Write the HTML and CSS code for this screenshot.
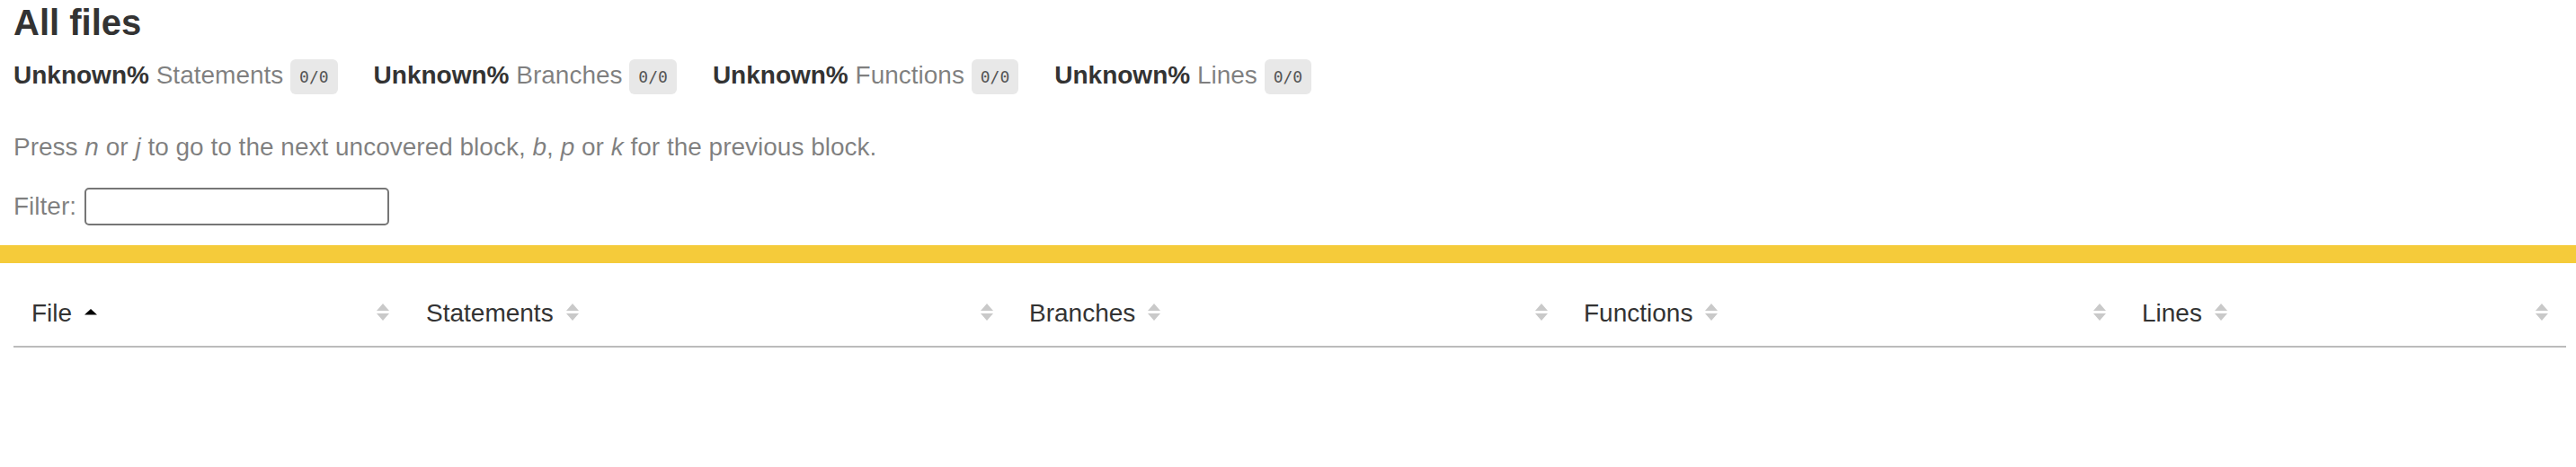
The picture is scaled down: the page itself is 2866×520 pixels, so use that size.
FILE: index.html
```html
<!doctype html>
<html lang="en">
<head>
<meta charset="utf-8">
<title>Code coverage report for All files</title>
<link rel="stylesheet" href="styles.css">
</head>
<body>
<div class="header">
  <h1 class="title">All files</h1>
  <div class="stats">
    <div class="stat"><span class="strong">Unknown% </span><span class="quiet">Statements</span> <span class="fraction">0/0</span></div>
    <div class="stat"><span class="strong">Unknown% </span><span class="quiet">Branches</span> <span class="fraction">0/0</span></div>
    <div class="stat"><span class="strong">Unknown% </span><span class="quiet">Functions</span> <span class="fraction">0/0</span></div>
    <div class="stat"><span class="strong">Unknown% </span><span class="quiet">Lines</span> <span class="fraction">0/0</span></div>
  </div>
  <p class="quiet hint">Press <em>n</em> or <em>j</em> to go to the next uncovered block, <em>b</em>, <em>p</em> or <em>k</em> for the previous block.</p>
  <div class="quiet filter">
    <label for="fileSearch">Filter:</label>
    <input type="search" id="fileSearch" class="search">
  </div>
</div>
<div class="status-line medium"></div>
<div class="table-wrap">
  <table class="coverage-summary">
    <colgroup>
      <col class="c-file"><col class="c-pic"><col class="c-stmt"><col class="c-abs">
      <col class="c-br"><col class="c-abs"><col class="c-fn"><col class="c-abs">
      <col class="c-lines"><col class="c-abs">
    </colgroup>
    <thead>
      <tr>
        <th class="file sorted">File<span class="sorter"><svg viewBox="0 0 14 20" width="14" height="20"><polygon points="7,6 14,12.5 0,12.5" fill="#000"/></svg></span></th>
        <th class="pic"><span class="sorter"><svg viewBox="0 0 14 20" width="14" height="20"><polygon points="7,0 14,8 0,8" fill="#c9c9c9"/><polygon points="0,11 14,11 7,19" fill="#c9c9c9"/></svg></span></th>
        <th class="pct">Statements<span class="sorter"><svg viewBox="0 0 14 20" width="14" height="20"><polygon points="7,0 14,8 0,8" fill="#c9c9c9"/><polygon points="0,11 14,11 7,19" fill="#c9c9c9"/></svg></span></th>
        <th class="abs"><span class="sorter"><svg viewBox="0 0 14 20" width="14" height="20"><polygon points="7,0 14,8 0,8" fill="#c9c9c9"/><polygon points="0,11 14,11 7,19" fill="#c9c9c9"/></svg></span></th>
        <th class="pct">Branches<span class="sorter"><svg viewBox="0 0 14 20" width="14" height="20"><polygon points="7,0 14,8 0,8" fill="#c9c9c9"/><polygon points="0,11 14,11 7,19" fill="#c9c9c9"/></svg></span></th>
        <th class="abs"><span class="sorter"><svg viewBox="0 0 14 20" width="14" height="20"><polygon points="7,0 14,8 0,8" fill="#c9c9c9"/><polygon points="0,11 14,11 7,19" fill="#c9c9c9"/></svg></span></th>
        <th class="pct">Functions<span class="sorter"><svg viewBox="0 0 14 20" width="14" height="20"><polygon points="7,0 14,8 0,8" fill="#c9c9c9"/><polygon points="0,11 14,11 7,19" fill="#c9c9c9"/></svg></span></th>
        <th class="abs"><span class="sorter"><svg viewBox="0 0 14 20" width="14" height="20"><polygon points="7,0 14,8 0,8" fill="#c9c9c9"/><polygon points="0,11 14,11 7,19" fill="#c9c9c9"/></svg></span></th>
        <th class="pct">Lines<span class="sorter"><svg viewBox="0 0 14 20" width="14" height="20"><polygon points="7,0 14,8 0,8" fill="#c9c9c9"/><polygon points="0,11 14,11 7,19" fill="#c9c9c9"/></svg></span></th>
        <th class="abs"><span class="sorter"><svg viewBox="0 0 14 20" width="14" height="20"><polygon points="7,0 14,8 0,8" fill="#c9c9c9"/><polygon points="0,11 14,11 7,19" fill="#c9c9c9"/></svg></span></th>
      </tr>
    </thead>
    <tbody></tbody>
  </table>
</div>
</body>
</html>
```
FILE: styles.css
```css
*, *::before, *::after { box-sizing: border-box; }

body {
  margin: 0;
  padding: 0;
  font-family: "Liberation Sans", Arial, sans-serif;
  font-size: 28px;
  line-height: 32px;
  color: #333;
  background: #fff;
}

.header {
  padding: 2px 11px 22px 15px;
}

.title {
  margin: 0;
  font-size: 40px;
  line-height: 46px;
  font-weight: bold;
  color: #333;
}

.stats {
  display: flex;
  flex-wrap: wrap;
}

.stat {
  padding: 20px 40px 20px 0;
  white-space: nowrap;
}

.strong { font-weight: bold; }

.quiet { color: rgba(0, 0, 0, 0.5); }

.fraction {
  font-family: "DejaVu Sans Mono", "Liberation Mono", monospace;
  font-size: 18px;
  line-height: 21px;
  color: #555;
  background: #e8e8e8;
  padding: 9px 10px;
  border-radius: 6px;
  vertical-align: middle;
}

.hint {
  margin: 28px 0;
}

.hint em { font-style: italic; }

.filter {
  display: flex;
  align-items: center;
  gap: 9px;
  padding-top: 1px;
}

.search {
  width: 339px;
  height: 42px;
  margin: 0;
  padding: 2px 4px;
  border: 2px solid #767676;
  border-radius: 5px;
  background: #fff;
  font-family: "Liberation Sans", Arial, sans-serif;
  font-size: 26px;
  -webkit-appearance: none;
  appearance: none;
}

.status-line {
  height: 20px;
}

.status-line.medium {
  background: #f5cb3a;
}

.table-wrap {
  padding: 20px 11px 20px 15px;
}

.coverage-summary {
  width: 100%;
  table-layout: fixed;
  border-collapse: collapse;
}

.c-file { width: 370px; }
.c-pic { width: 69px; }
.c-abs { width: 69px; }
.c-stmt { width: 602px; }
.c-br { width: 548px; }
.c-fn { width: 552px; }
.c-lines { width: 423px; }

.coverage-summary tr {
  border-bottom: 2px solid #bbb;
}

.coverage-summary th {
  padding: 20px;
  text-align: left;
  font-weight: normal;
  white-space: nowrap;
  color: #333;
  line-height: 32px;
}

.coverage-summary th.abs {
  text-align: right;
  padding-left: 0;
}

.sorter {
  display: inline-block;
  width: 14px;
  height: 20px;
  margin-left: 14px;
  vertical-align: baseline;
}

.sorter svg {
  display: block;
}
```
